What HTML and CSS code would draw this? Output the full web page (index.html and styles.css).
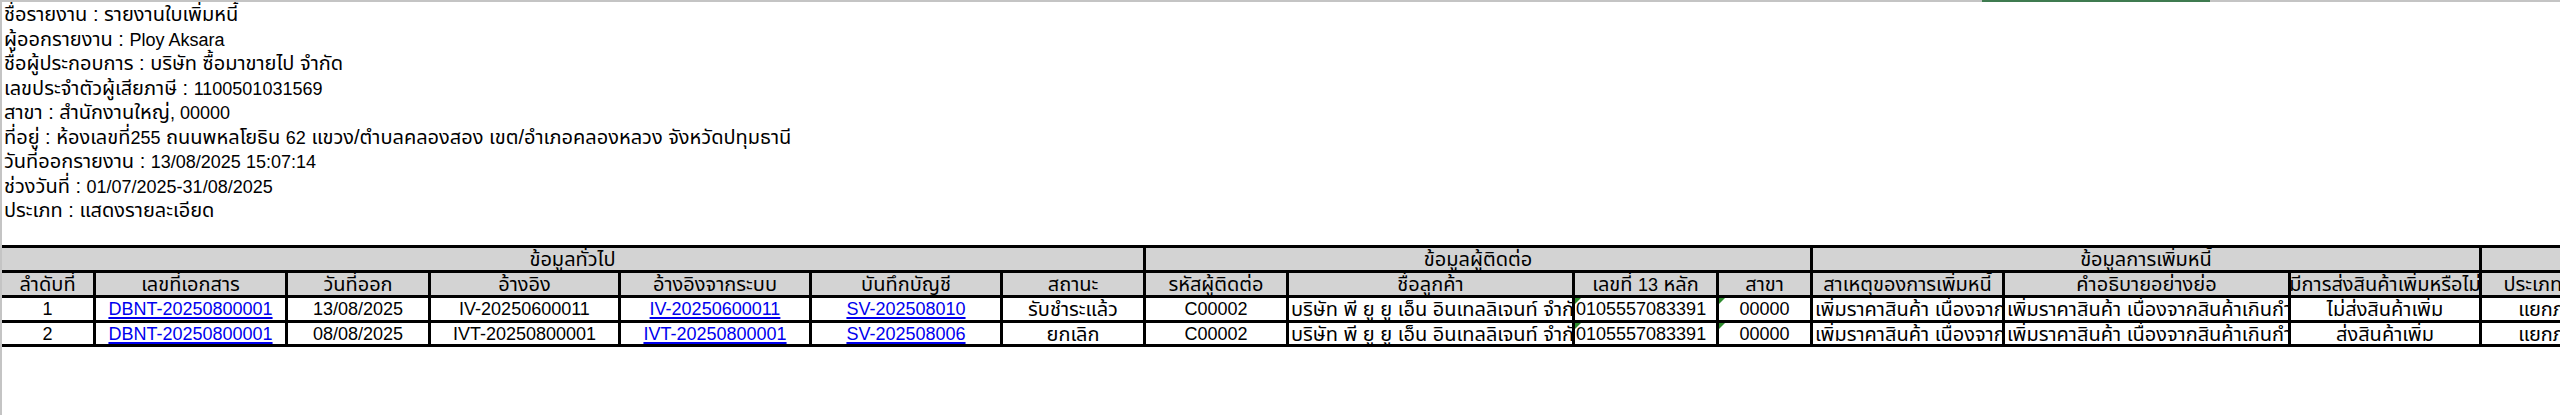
FILE: index.html
```html
<!DOCTYPE html>
<html lang="th">
<head>
<meta charset="utf-8">
<title>รายงานใบเพิ่มหนี้</title>
<link rel="stylesheet" href="styles.css">
</head>
<body>
<div class="topbar"><span class="tb-gray tb-a"></span><span class="tb-green"></span><span class="tb-gray tb-b"></span></div>
<div class="sheet">
  <div class="info">
    <div class="line">ชื่อรายงาน : รายงานใบเพิ่มหนี้</div>
    <div class="line">ผู้ออกรายงาน : <span class="en">Ploy Aksara</span></div>
    <div class="line">ชื่อผู้ประกอบการ : บริษัท ซื้อมาขายไป จำกัด</div>
    <div class="line">เลขประจำตัวผู้เสียภาษี : <span class="en">1100501031569</span></div>
    <div class="line">สาขา : สำนักงานใหญ่<span class="en">, 00000</span></div>
    <div class="line">ที่อยู่ : ห้องเลขที่<span class="en">255</span> ถนนพหลโยธิน <span class="en">62</span> แขวง/ตำบลคลองสอง เขต/อำเภอคลองหลวง จังหวัดปทุมธานี</div>
    <div class="line">วันที่ออกรายงาน : <span class="en">13/08/2025 15:07:14</span></div>
    <div class="line">ช่วงวันที่ : <span class="en">01/07/2025-31/08/2025</span></div>
    <div class="line">ประเภท : แสดงรายละเอียด</div>
  </div>
  <div class="grid">
    <div class="c h1 span7"><span>ข้อมูลทั่วไป</span></div>
    <div class="c h1 span4"><span>ข้อมูลผู้ติดต่อ</span></div>
    <div class="c h1 span3"><span>ข้อมูลการเพิ่มหนี้</span></div>
    <div class="c h1 span4"><span>ข้อมูลราคา</span></div>

    <div class="c h2"><span>ลำดับที่</span></div>
    <div class="c h2"><span>เลขที่เอกสาร</span></div>
    <div class="c h2"><span>วันที่ออก</span></div>
    <div class="c h2"><span>อ้างอิง</span></div>
    <div class="c h2"><span>อ้างอิงจากระบบ</span></div>
    <div class="c h2"><span>บันทึกบัญชี</span></div>
    <div class="c h2"><span>สถานะ</span></div>
    <div class="c h2"><span>รหัสผู้ติดต่อ</span></div>
    <div class="c h2"><span>ชื่อลูกค้า</span></div>
    <div class="c h2"><span>เลขที่ <span class="en">13</span> หลัก</span></div>
    <div class="c h2"><span>สาขา</span></div>
    <div class="c h2"><span>สาเหตุของการเพิ่มหนี้</span></div>
    <div class="c h2"><span>คำอธิบายอย่างย่อ</span></div>
    <div class="c h2"><span>มีการส่งสินค้าเพิ่มหรือไม่</span></div>
    <div class="c h2"><span>ประเภทราคา</span></div>
    <div class="c h2"><span>มูลค่าเดิม</span></div>
    <div class="c h2"><span>มูลค่าที่ถูกต้อง</span></div>
    <div class="c h2"><span>ผลต่าง</span></div>

    <div class="c d"><span class="en">1</span></div>
    <div class="c d"><a class="en" href="#">DBNT-20250800001</a></div>
    <div class="c d"><span class="en">13/08/2025</span></div>
    <div class="c d"><span class="en">IV-20250600011</span></div>
    <div class="c d"><a class="en" href="#">IV-20250600011</a></div>
    <div class="c d"><a class="en" href="#">SV-202508010</a></div>
    <div class="c d"><span>รับชำระแล้ว</span></div>
    <div class="c d"><span class="en">C00002</span></div>
    <div class="c d left"><span>บริษัท พี ยู ยู เอ็น อินเทลลิเจนท์ จำกัด</span></div>
    <div class="c d num flag"><span class="en">0105557083391</span></div>
    <div class="c d flag"><span class="en">00000</span></div>
    <div class="c d left"><span>เพิ่มราคาสินค้า เนื่องจากสินค้าเกินกำหนด</span></div>
    <div class="c d left"><span>เพิ่มราคาสินค้า เนื่องจากสินค้าเกินกำหนด</span></div>
    <div class="c d"><span>ไม่ส่งสินค้าเพิ่ม</span></div>
    <div class="c d"><span>แยกภาษี</span></div>
    <div class="c d"><span class="en">1,000.00</span></div>
    <div class="c d"><span class="en">1,200.00</span></div>
    <div class="c d"><span class="en">200.00</span></div>

    <div class="c d"><span class="en">2</span></div>
    <div class="c d"><a class="en" href="#">DBNT-20250800001</a></div>
    <div class="c d"><span class="en">08/08/2025</span></div>
    <div class="c d"><span class="en">IVT-20250800001</span></div>
    <div class="c d"><a class="en" href="#">IVT-20250800001</a></div>
    <div class="c d"><a class="en" href="#">SV-202508006</a></div>
    <div class="c d"><span>ยกเลิก</span></div>
    <div class="c d"><span class="en">C00002</span></div>
    <div class="c d left"><span>บริษัท พี ยู ยู เอ็น อินเทลลิเจนท์ จำกัด</span></div>
    <div class="c d num flag"><span class="en">0105557083391</span></div>
    <div class="c d flag"><span class="en">00000</span></div>
    <div class="c d left"><span>เพิ่มราคาสินค้า เนื่องจากสินค้าเกินกำหนด</span></div>
    <div class="c d left"><span>เพิ่มราคาสินค้า เนื่องจากสินค้าเกินกำหนด</span></div>
    <div class="c d"><span>ส่งสินค้าเพิ่ม</span></div>
    <div class="c d"><span>แยกภาษี</span></div>
    <div class="c d"><span class="en">2,000.00</span></div>
    <div class="c d"><span class="en">2,400.00</span></div>
    <div class="c d"><span class="en">400.00</span></div>
  </div>
</div>
</body>
</html>
```
FILE: styles.css
```css
html, body {
  margin: 0;
  padding: 0;
  background: #ffffff;
}
body {
  width: 2560px;
  height: 415px;
  overflow: hidden;
  font-family: "Liberation Sans", "Noto Sans Thai", "Noto Sans Thai UI", Tahoma, "Noto Sans", sans-serif;
  font-size: 20px;
  color: #000;
}
.en {
  font-size: 18px;
}
.topbar {
  display: flex;
  height: 2px;
}
.tb-gray {
  background: #c4c4c4;
}
.tb-a {
  width: 1982px;
}
.tb-green {
  width: 228px;
  background: #3f7b50;
}
.tb-b {
  flex: 1;
}
.sheet {
  border-left: 2px solid #c4c4c4;
  height: 413px;
  display: flex;
  flex-direction: column;
  overflow: hidden;
}
.info {
  padding-left: 2px;
  margin-bottom: 22.5px;
}
.line {
  height: 24.5px;
  line-height: 24.5px;
  white-space: nowrap;
}
.grid {
  display: grid;
  grid-template-columns: 94px 192px 143px 190px 191px 191px 143px 143px 286px 144px 94px 192px 286px 191px 143px 143px 143px 143px;
  grid-template-rows: 25px 25px 25px 24px;
  border-top: 3px solid #000;
  width: max-content;
}
.c {
  box-sizing: border-box;
  border-right: 3px solid #000;
  border-bottom: 3px solid #000;
  display: flex;
  align-items: center;
  justify-content: center;
  overflow: hidden;
  white-space: nowrap;
  position: relative;
  padding: 0 2px;
  line-height: 22px;
}
.c > span, .c > a {
  flex: none;
}
.h1, .h2 {
  background: #d3d3d3;
}
.span7 { grid-column: span 7; }
.span4 { grid-column: span 4; }
.span3 { grid-column: span 3; }
.d {
  background: #fff;
}
.left {
  justify-content: flex-start;
}
.num {
  justify-content: flex-start;
  padding-left: 1px;
}
.c a {
  color: #0000ee;
  text-decoration: underline;
  text-decoration-thickness: 2px;
  text-underline-offset: 2px;
}
.flag::before {
  content: "";
  position: absolute;
  left: 0;
  top: 0;
  width: 0;
  height: 0;
  border-top: 6px solid #2e8b2e;
  border-right: 6px solid transparent;
}
```
